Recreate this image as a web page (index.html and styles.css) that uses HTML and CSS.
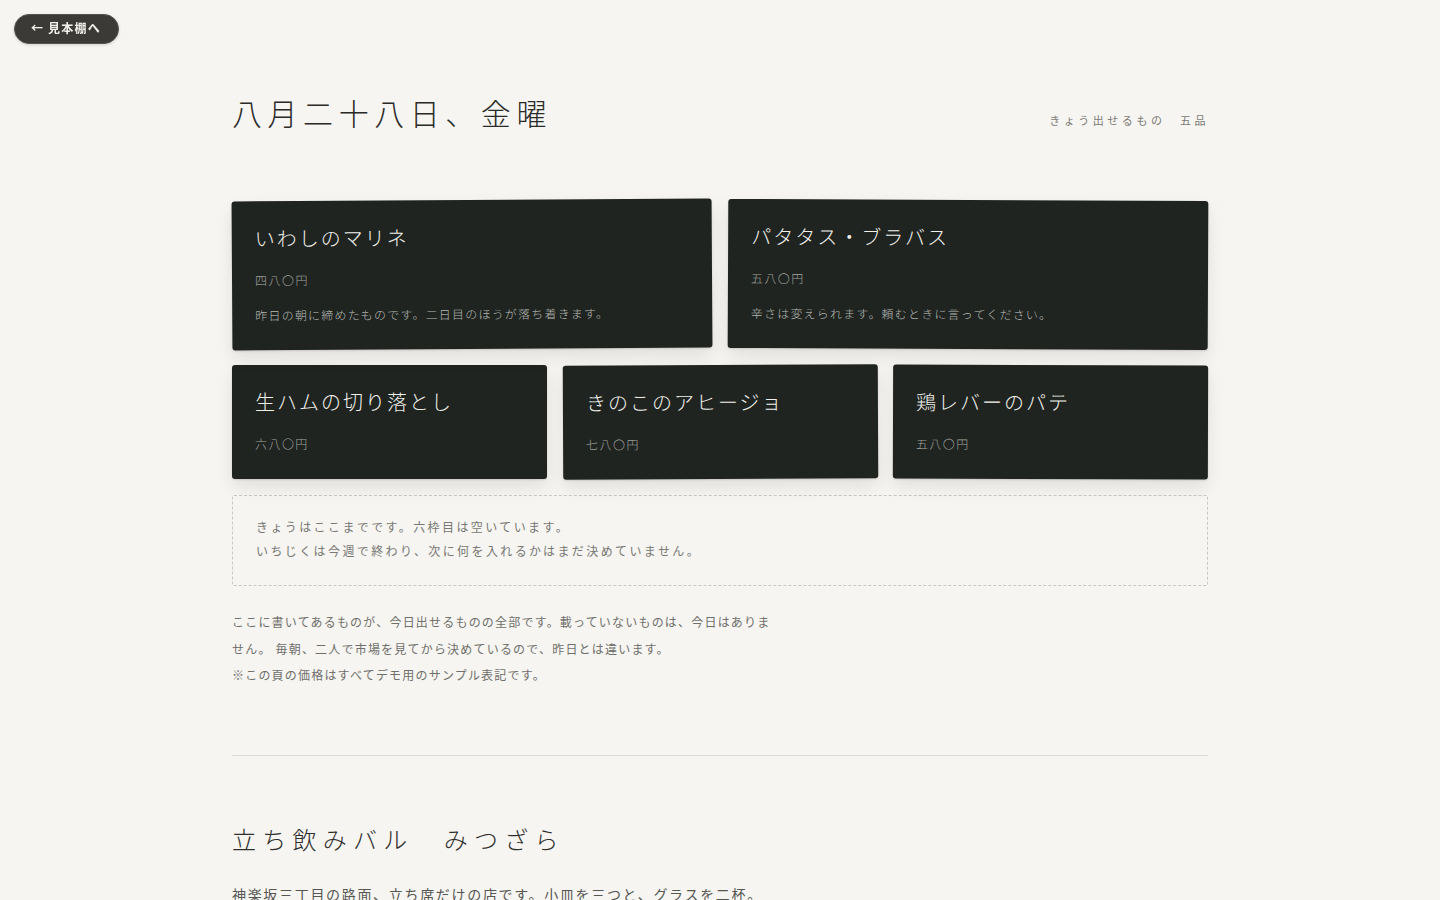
FILE: index.html
```html
<!DOCTYPE html>
<html lang="ja">
<head>
<meta charset="utf-8">
<title>八月二十八日、金曜</title>
<link rel="stylesheet" href="styles.css">
</head>
<body>
<a class="back" href="#">← 見本棚へ</a>
<main class="page">
  <header class="head">
    <h1 class="date">八月二十八日、金曜</h1>
    <p class="count">きょう出せるもの　五品</p>
  </header>

  <section class="menu">
    <article class="card wide tilt-a">
      <h2 class="card-title">いわしのマリネ</h2>
      <p class="price">四八〇円</p>
      <p class="desc">昨日の朝に締めたものです。二日目のほうが落ち着きます。</p>
    </article>
    <article class="card wide tilt-b">
      <h2 class="card-title">パタタス・ブラバス</h2>
      <p class="price">五八〇円</p>
      <p class="desc">辛さは変えられます。頼むときに言ってください。</p>
    </article>
    <article class="card narrow">
      <h2 class="card-title">生ハムの切り落とし</h2>
      <p class="price">六八〇円</p>
    </article>
    <article class="card narrow tilt-c">
      <h2 class="card-title">きのこのアヒージョ</h2>
      <p class="price">七八〇円</p>
    </article>
    <article class="card narrow tilt-d">
      <h2 class="card-title">鶏レバーのパテ</h2>
      <p class="price">五八〇円</p>
    </article>
  </section>

  <div class="note">
    <p>きょうはここまでです。六枠目は空いています。</p>
    <p>いちじくは今週で終わり、次に何を入れるかはまだ決めていません。</p>
  </div>

  <p class="lead">ここに書いてあるものが、今日出せるものの全部です。載っていないものは、今日はありません。 毎朝、二人で市場を見てから決めているので、昨日とは違います。<br>※この頁の価格はすべてデモ用のサンプル表記です。</p>

  <hr class="rule">

  <section class="about">
    <h2 class="shop">立ち飲みバル　みつざら</h2>
    <p class="intro">神楽坂三丁目の路面、立ち席だけの店です。小皿を三つと、グラスを二杯。</p>
  </section>
</main>
</body>
</html>
```

FILE: styles.css
```css
* { box-sizing: border-box; }

html, body {
  margin: 0;
  padding: 0;
  background: #f6f5f1;
  color: #333;
  font-family: "Noto Sans CJK JP", "Noto Sans", sans-serif;
}

.back {
  position: fixed;
  top: 14px;
  left: 14px;
  height: 30px;
  padding: 0 17px 2px 16px;
  display: flex;
  align-items: center;
  border-radius: 15px;
  background: #3b3a37;
  border: 1px solid #54534f;
  color: #f2f1ec;
  font-size: 12px;
  line-height: 1;
  font-weight: 700;
  letter-spacing: 0.1em;
  text-decoration: none;
  box-shadow: 0 1px 3px rgba(0,0,0,0.15);
}

.page {
  width: 976px;
  margin: 0 auto;
  padding-top: 91px;
}

.head {
  display: flex;
  justify-content: space-between;
  align-items: baseline;
}

.date {
  margin: 0;
  font-size: 30px;
  line-height: 42px;
  font-weight: 300;
  letter-spacing: 0.185em;
  color: #2a2a28;
}

.count {
  margin: 0 -1px 0 0;
  padding-top: 1px;
  font-size: 11px;
  letter-spacing: 0.32em;
  color: #7a7a76;
}

.menu {
  margin-top: 67px;
  display: grid;
  grid-template-columns: repeat(6, 1fr);
  gap: 16px;
}

.card {
  background: #1f2421;
  border-radius: 3px;
  padding: 24px 23px 25px;
  box-shadow: 0 8px 18px rgba(0,0,0,0.09), 0 1px 2px rgba(0,0,0,0.12);
}
.wide { grid-column: span 3; }
.narrow { grid-column: span 2; padding-bottom: 26px; }
.tilt-a { transform: rotate(-0.35deg); }
.tilt-b { transform: rotate(0.25deg); }
.tilt-c { transform: rotate(-0.25deg); }
.tilt-d { transform: rotate(0.15deg); }

.card-title {
  margin: 0;
  font-size: 20px;
  line-height: 26px;
  font-weight: 300;
  letter-spacing: 0.1em;
  color: #f1f0ea;
}

.price {
  margin: 20px 0 0;
  font-size: 12px;
  line-height: 18px;
  font-weight: 300;
  letter-spacing: 0.12em;
  color: #a0a39e;
}

.desc {
  margin: 16px 0 0;
  font-size: 12px;
  line-height: 20px;
  font-weight: 300;
  letter-spacing: 0.1em;
  color: #b5b8b2;
}

.note {
  margin-top: 16px;
  border: 1px dashed #c9c8c3;
  border-radius: 2px;
  padding: 19px 23px 22px;
}
.note p {
  margin: 0;
  font-size: 12px;
  line-height: 24px;
  letter-spacing: 0.2em;
  color: #777773;
}

.lead {
  margin: 23px 0 0;
  max-width: 548px;
  font-size: 12px;
  line-height: 26.5px;
  letter-spacing: 0.1em;
  color: #6f6f6b;
}

.rule {
  margin: 66px 0 0;
  border: 0;
  border-top: 1px solid #dcdbd6;
}

.about {
  padding-top: 65px;
}

.shop {
  margin: 0;
  font-size: 24px;
  line-height: 36px;
  font-weight: 300;
  letter-spacing: 0.26em;
  color: #2e2e2c;
}

.intro {
  margin: 24px 0 0;
  font-size: 14px;
  line-height: 26px;
  letter-spacing: 0.12em;
  color: #555552;
}
```
